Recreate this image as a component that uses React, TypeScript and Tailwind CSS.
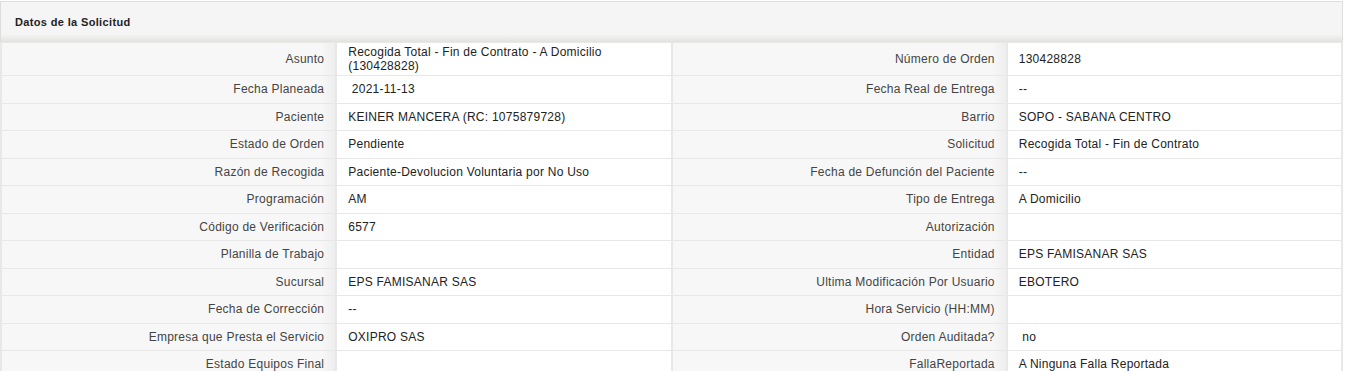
import { Fragment } from "react";

const rows: [string, string, string, string][] = [
  ["Asunto", "Recogida Total - Fin de Contrato - A Domicilio\n(130428828)", "Número de Orden", "130428828"],
  ["Fecha Planeada", "\u00a02021-11-13", "Fecha Real de Entrega", "--"],
  ["Paciente", "KEINER MANCERA (RC: 1075879728)", "Barrio", "SOPO - SABANA CENTRO"],
  ["Estado de Orden", "Pendiente", "Solicitud", "Recogida Total - Fin de Contrato"],
  ["Razón de Recogida", "Paciente-Devolucion Voluntaria por No Uso", "Fecha de Defunción del Paciente", "--"],
  ["Programación", "AM", "Tipo de Entrega", "A Domicilio"],
  ["Código de Verificación", "6577", "Autorización", ""],
  ["Planilla de Trabajo", "", "Entidad", "EPS FAMISANAR SAS"],
  ["Sucursal", "EPS FAMISANAR SAS", "Ultima Modificación Por Usuario", "EBOTERO"],
  ["Fecha de Corrección", "--", "Hora Servicio (HH:MM)", ""],
  ["Empresa que Presta el Servicio", "OXIPRO SAS", "Orden Auditada?", "\u00a0no"],
  ["Estado Equipos Final", "", "FallaReportada", "A Ninguna Falla Reportada"],
];

const label =
  "h-[26.5px] py-[2px] pr-[11px] text-right align-middle text-[#444] bg-[linear-gradient(to_right,#f7f7f7_96%,#eeeeee)]";
const value = "h-[26.5px] py-[2px] pl-[11px] pr-2 text-left align-middle text-[#222] bg-white";

function Lines({ text }: { text: string }) {
  const parts = text.split("\n");
  return (
    <>
      {parts.map((p, i) => (
        <Fragment key={i}>
          {i > 0 && <br />}
          {p}
        </Fragment>
      ))}
    </>
  );
}

export default function App() {
  return (
    <div className="w-[1357px] h-[371px] overflow-hidden bg-white font-['Liberation_Sans',Arial,sans-serif]">
      <div className="w-[1343px] pt-px">
        <div className="h-[42px] border border-[#dddddd] bg-[linear-gradient(to_bottom,#f5f5f5_80%,#e2e2de)] flex items-center pl-[14px] pt-px">
          <span className="text-[11px] font-bold text-[#222] tracking-[0.35px]">Datos de la Solicitud</span>
        </div>
        <table className="w-full table-fixed border-separate border-spacing-x-[2px] border-spacing-y-px bg-[#e8e8e8] text-[12px] leading-[14px] tracking-[0.25px] -mt-px">
          <tbody>
            {rows.map((r) => (
              <tr key={r[0]}>
                <td className={label}>{r[0]}</td>
                <td className={value}>
                  <Lines text={r[1]} />
                </td>
                <td className={label}>{r[2]}</td>
                <td className={value}>{r[3]}</td>
              </tr>
            ))}
          </tbody>
        </table>
      </div>
    </div>
  );
}
